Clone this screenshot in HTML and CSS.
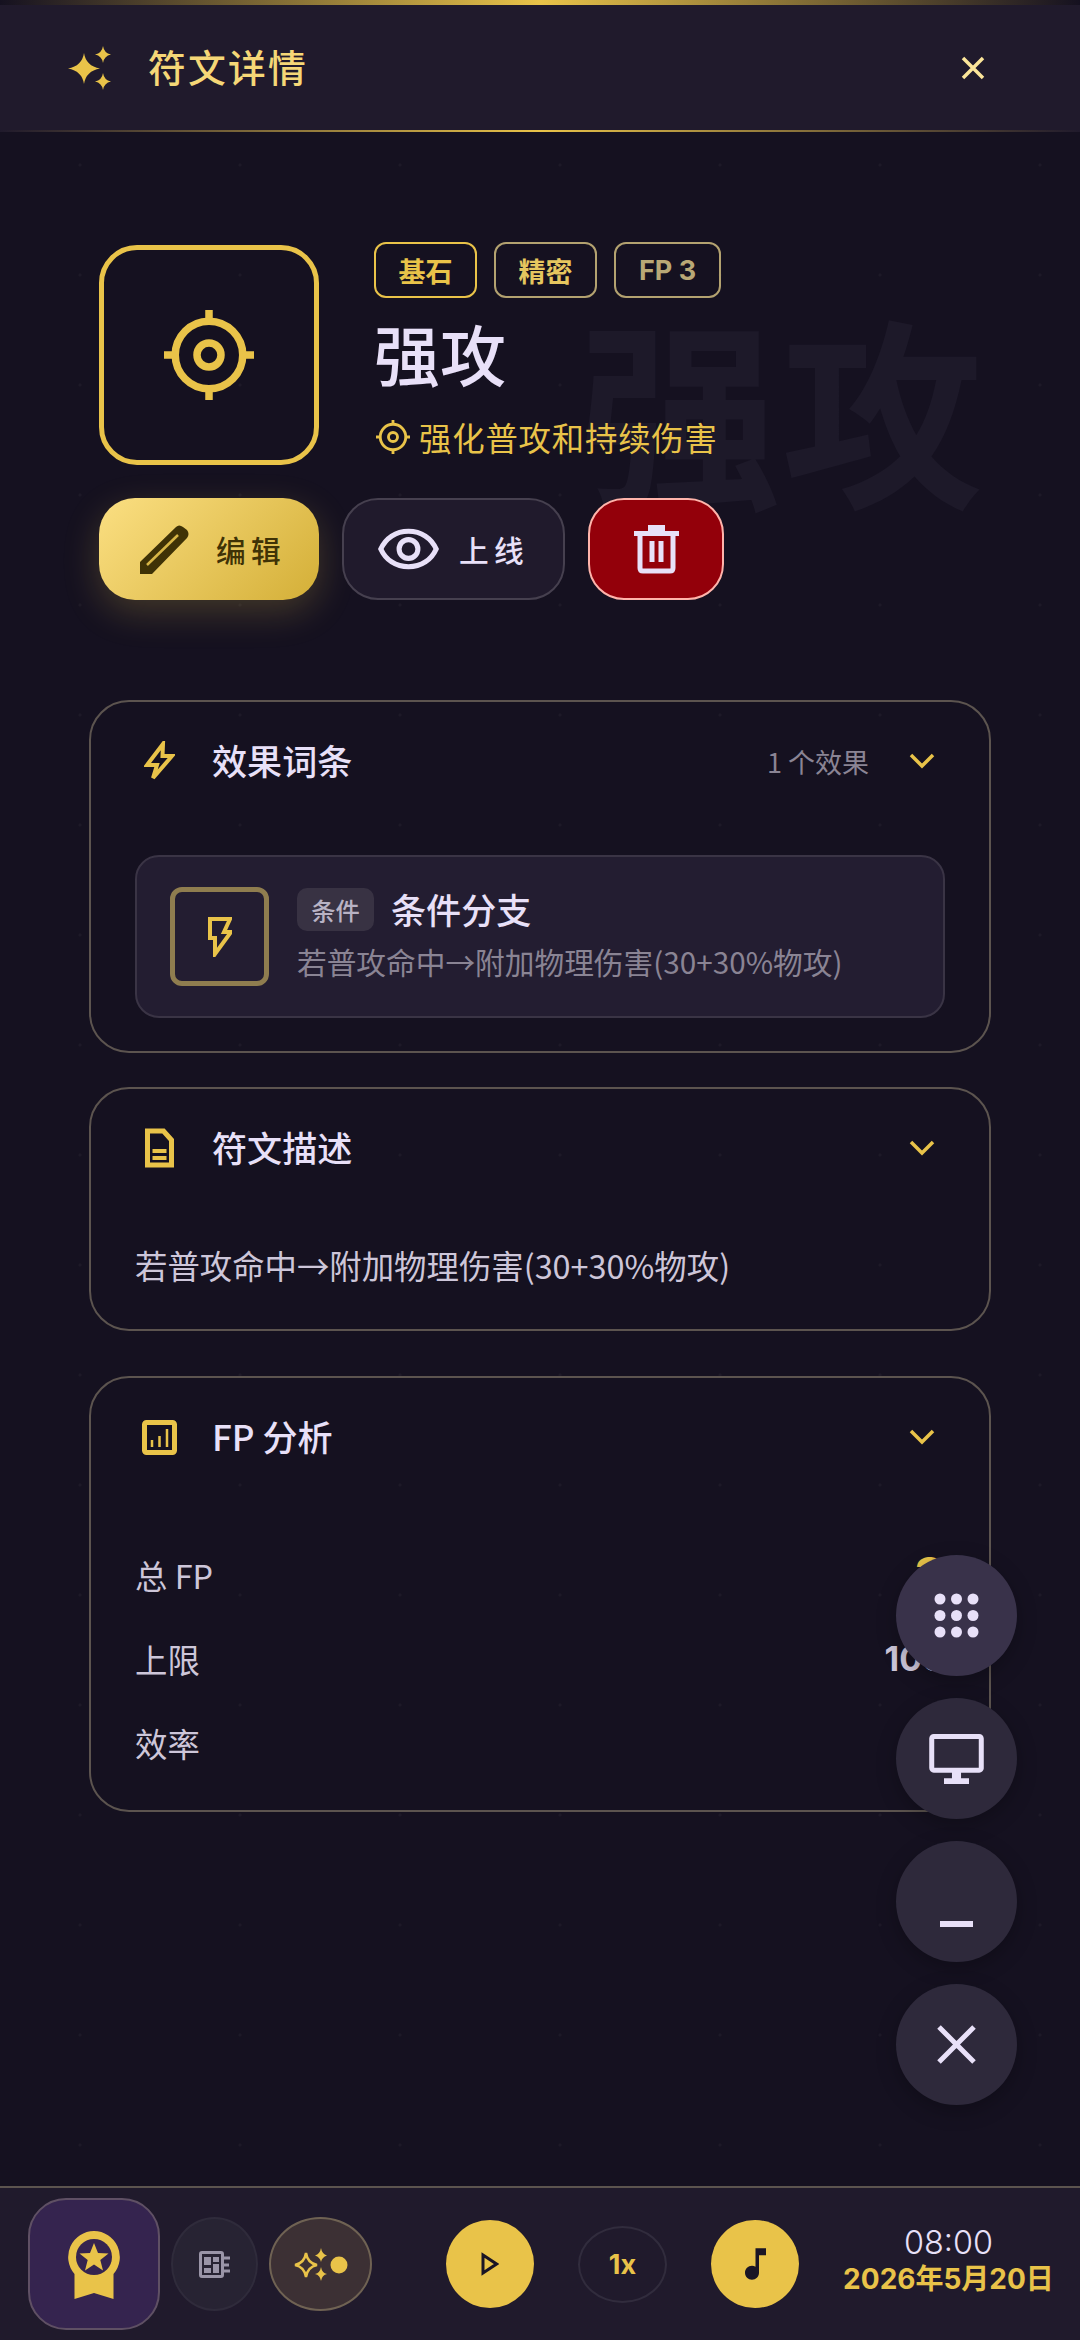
FILE: index.html
```html
<!DOCTYPE html>
<html lang="zh-CN">
<head>
  <meta charset="UTF-8" />
  <meta name="viewport" content="width=device-width, initial-scale=1.0"/>
  <title>符文详情</title>
  <link rel="stylesheet" href="styles.css">
</head>
<body>
  <div class="top-line"></div>

  <header class="header">
    <div class="header-left">
      <svg class="header-spark" viewBox="0 0 44 44"><path d="M16 7Q18 20 32 22.500Q18 25 16 38Q14 25 0 22.500Q14 20 16 7ZM35 0Q36 7 43 8.500Q36 10 35 17Q34 10 27 8.500Q34 7 35 0ZM35 27Q36 34 43 35.500Q36 37 35 44Q34 37 27 35.500Q34 34 35 27Z"/></svg>
      <h1 class="header-title">符文详情</h1>
    </div>
    <svg class="header-close" viewBox="0 0 24 24"><path d="M2 2L22 22M22 2L2 22"/></svg>
  </header>

  <main class="main">
    <section class="hero">
      <div class="watermark">强攻</div>
      <div class="hero-top">
        <div class="rune-icon">
          <svg viewBox="0 0 24 24"><circle cx="12" cy="12" r="9"/><circle cx="12" cy="12" r="3.200"/><path d="M12 0V3.200M12 20.800V24M0 12H3.200M20.800 12H24"/></svg>
        </div>
        <div class="rune-info">
          <div class="tags">
            <span class="tag tag-gold">基石</span>
            <span class="tag">精密</span>
            <span class="tag tag-dim">FP 3</span>
          </div>
          <h2 class="rune-name">强攻</h2>
          <div class="rune-sub">
            <svg viewBox="0 0 24 24"><circle cx="12" cy="12" r="9"/><circle cx="12" cy="12" r="3.200"/><path d="M12 0V3.200M12 20.800V24M0 12H3.200M20.800 12H24"/></svg>
            <span>强化普攻和持续伤害</span>
          </div>
        </div>
      </div>
      <div class="actions">
        <button class="btn btn-edit">
          <svg viewBox="0 0 49 49"><path class="pen" d="M0 49V37L36 2Q39 -1 43 2L47 5Q50 9 47 13L12 49Z"/><path class="pen-line" d="M7 40L38 10"/></svg>
          <span>编辑</span>
        </button>
        <button class="btn btn-online">
          <svg viewBox="0 0 24 16"><path d="M1.100 8C3 3.700 7 1 12 1S21 3.700 22.900 8C21 12.300 17 15 12 15S3 12.300 1.100 8Z"/><circle cx="12" cy="8" r="3.700"/></svg>
          <span>上线</span>
        </button>
        <button class="btn btn-delete">
          <svg viewBox="0 0 45 50"><path d="M0 7H45V12H0ZM14 1H31V7H14Z" class="fill"/><path d="M6 10V44Q6 47 9 47H36Q39 47 39 44V10M18 17V38M27 17V38"/></svg>
        </button>
      </div>
    </section>

    <section class="panel panel-effects">
      <div class="panel-head">
        <svg class="panel-icon" viewBox="0 0 31 40"><path d="M19 3L3 24H13L9 37L28 15H18.500Z"/></svg>
        <h3 class="panel-title">效果词条</h3>
        <span class="panel-count">1 个效果</span>
        <svg class="chevron" viewBox="0 0 26 16"><path d="M2 2L13 13L24 2"/></svg>
      </div>
      <div class="effect">
        <div class="effect-icon">
          <svg viewBox="0 0 24 40"><path d="M2 2H22L16 15H23L7 37V21H2Z"/></svg>
        </div>
        <div class="effect-body">
          <div class="effect-top">
            <span class="effect-tag">条件</span>
            <span class="effect-name">条件分支</span>
          </div>
          <div class="effect-desc">若普攻命中→附加物理伤害(30+30%物攻)</div>
        </div>
      </div>
    </section>

    <section class="panel panel-desc">
      <div class="panel-head">
        <svg class="panel-icon panel-icon-doc" viewBox="0 0 30 40"><path d="M3 3H19L27 12V37H3Z"/><path class="bar" d="M8 23H22M8 30H22"/></svg>
        <h3 class="panel-title">符文描述</h3>
        <svg class="chevron" viewBox="0 0 26 16"><path d="M2 2L13 13L24 2"/></svg>
      </div>
      <p class="desc-text">若普攻命中→附加物理伤害(30+30%物攻)</p>
    </section>

    <section class="panel panel-fp">
      <div class="panel-head">
        <svg class="panel-icon panel-icon-wide" viewBox="0 0 35 35"><rect x="2.500" y="2.500" width="30" height="30" rx="2"/><path class="thin" d="M10 27V20M17.500 27V16M25 27V9"/></svg>
        <h3 class="panel-title">FP 分析</h3>
        <svg class="chevron" viewBox="0 0 26 16"><path d="M2 2L13 13L24 2"/></svg>
      </div>
      <div class="fp-rows">
        <div class="fp-row"><span>总 FP</span><b class="fp-gold">3</b></div>
        <div class="fp-row"><span>上限</span><b>100</b></div>
        <div class="fp-row"><span>效率</span><b class="fp-small">3%</b></div>
      </div>
    </section>
  </main>

  <div class="fabs">
    <button class="fab fab-light">
      <svg class="fab-apps" viewBox="0 0 45 45"><circle cx="6" cy="6" r="5.500"/><circle cx="22.500" cy="6" r="5.500"/><circle cx="39" cy="6" r="5.500"/><circle cx="6" cy="22.500" r="5.500"/><circle cx="22.500" cy="22.500" r="5.500"/><circle cx="39" cy="22.500" r="5.500"/><circle cx="6" cy="39" r="5.500"/><circle cx="22.500" cy="39" r="5.500"/><circle cx="39" cy="39" r="5.500"/></svg>
    </button>
    <button class="fab">
      <svg class="fab-monitor" viewBox="0 0 24 22"><path d="M22 0H2C.9 0 0 .9 0 2V15C0 16.100 .9 17 2 17H10V19.500H6.500V22H17.500V19.500H14V17H22C23.100 17 24 16.100 24 15V2C24 .9 23.100 0 22 0ZM21.800 14.800H2.200V2.200H21.800Z"/></svg>
    </button>
    <button class="fab fab-low">
      <span class="fab-minus"></span>
    </button>
    <button class="fab">
      <svg class="fab-x" viewBox="0 0 39 39"><path d="M2 2L37 37M37 2L2 37"/></svg>
    </button>
  </div>

  <footer class="tabbar">
    <div class="tab-left">
      <button class="tab-badge">
        <svg viewBox="0 0 52 70"><path d="M26 0A26 26 0 0 1 45.500 43V68L26 62L6.500 68V43A26 26 0 0 1 26 0Z" class="gold"/><circle cx="26" cy="26" r="18" class="hole"/><path class="gold" d="M26 12L30 22L40.500 22.500L32.300 29L35 39.500L26 33.500L17 39.500L19.700 29L11.500 22.500L22 22Z"/></svg>
      </button>
      <button class="tab-round tab-news">
        <svg viewBox="0 0 32 27"><rect x="1.500" y="1.500" width="22" height="24" rx="1.500"/><path class="block" d="M5 6H12V14H5ZM14 6H20V11H14ZM5 17H12V22H5ZM14 13H20V22H14Z"/><path d="M24 7H31M24 14H30M24 20H31"/></svg>
      </button>
      <button class="tab-round tab-spark">
        <svg viewBox="0 0 54 33"><path class="open" d="M12 5Q13.500 15 23 17Q13.500 19 12 29Q10.500 19 1 17Q10.500 15 12 5Z"/><path d="M27 0Q28 6 33 7.500Q28 9 27 14Q26 9 21 7.500Q26 6 27 0ZM27 19Q28 25 33 26Q28 27 27 33Q26 27 21 26Q26 25 27 19Z"/><circle cx="45" cy="17" r="8.500"/></svg>
      </button>
    </div>
    <div class="tab-mid">
      <button class="tab-gold">
        <svg class="icon-play" viewBox="0 0 18 24"><path d="M2 3L15.500 12L2 21Z"/></svg>
      </button>
      <button class="tab-speed">1x</button>
      <button class="tab-gold">
        <svg class="icon-music" viewBox="6 3 12 18"><path d="M12 3v10.550c-.59-.34-1.270-.55-2-.55-2.210 0-4 1.790-4 4s1.790 4 4 4 4-1.790 4-4V7h4V3h-6z"/></svg>
      </button>
    </div>
    <div class="clock">
      <div class="clock-time">08:00</div>
      <div class="clock-date">2026年5月20日</div>
    </div>
  </footer>
</body>
</html>
```

FILE: styles.css
```css
:root {
  --gold: #e9c349;
  --lilac: #e8e0f8;
  --bg: #151120;
  --surface: #201a2c;
  --panel-line: #5c544f;
  --font: "Noto Sans CJK SC", "Noto Sans", sans-serif;
  --font-num: Inter, "Noto Sans CJK SC", sans-serif;
}

* {
  box-sizing: border-box;
}

html, body {
  margin: 0;
  padding: 0;
}

body {
  width: 1080px;
  height: 2340px;
  position: relative;
  overflow: hidden;
  display: flex;
  flex-direction: column;
  font-family: var(--font);
  color: var(--lilac);
  background-color: var(--bg);
  background-image: radial-gradient(circle, rgba(255, 255, 255, 0.035) 1px, transparent 2px);
  background-size: 160px 110px;
}

button {
  font-family: inherit;
  padding: 0;
  border: none;
  cursor: pointer;
}

h1, h2, h3, p {
  margin: 0;
}

.top-line {
  height: 5px;
  background: linear-gradient(90deg, transparent, var(--gold) 50%, transparent);
}

.header {
  height: 127px;
  padding: 0 95px 0 68px;
  display: flex;
  align-items: center;
  justify-content: space-between;
  background: var(--surface);
  border-bottom: 2px solid;
  border-image: linear-gradient(90deg, transparent, var(--gold) 50%, transparent) 1;
}

.header-left {
  display: flex;
  align-items: center;
  gap: 36px;
}

.header-spark {
  width: 44px;
  height: 44px;
  fill: var(--gold);
}

.header-title {
  margin-top: -4px;
  font-size: 37.800px;
  line-height: 44px;
  font-weight: 500;
  letter-spacing: 2.200px;
  color: #f5d777;
}

.header-close {
  width: 24px;
  height: 24px;
  fill: none;
  stroke: #fbe59a;
  stroke-width: 3.500;
}

.main {
  flex: 1;
  padding: 110px 89px 0;
}

.hero {
  position: relative;
  padding: 0 10px;
}

.watermark {
  position: absolute;
  left: 490px;
  top: 62px;
  font-size: 202px;
  line-height: 1;
  font-weight: 700;
  color: #1d1929;
  white-space: nowrap;
}

.hero-top {
  position: relative;
  display: flex;
  gap: 55px;
}

.rune-icon {
  width: 220px;
  height: 220px;
  margin-top: 3px;
  flex: none;
  display: flex;
  align-items: center;
  justify-content: center;
  border: 5px solid var(--gold);
  border-radius: 38px;
}

.rune-icon svg {
  width: 90px;
  height: 90px;
  fill: none;
  stroke: var(--gold);
  stroke-width: 2;
}

.tags {
  display: flex;
  gap: 17px;
}

.tag {
  height: 56px;
  padding: 0 22.500px;
  display: flex;
  align-items: center;
  font-family: var(--font-num);
  font-size: 27px;
  font-weight: 700;
  color: #e6c65f;
  border: 2px solid #b3a270;
  border-radius: 12px;
}

.tag-gold {
  border-color: var(--gold);
  color: var(--gold);
}

.tag-dim {
  padding: 0 23px;
  color: #b9a876;
}

.rune-name {
  margin-top: 9px;
  font-size: 66px;
  line-height: 90px;
  font-weight: 500;
}

.rune-sub {
  margin-top: 17px;
  display: flex;
  align-items: center;
  gap: 9px;
  font-size: 32.400px;
  line-height: 46px;
  letter-spacing: 0.800px;
  color: var(--gold);
}

.rune-sub svg {
  width: 34px;
  height: 34px;
  margin-left: 2px;
  fill: none;
  stroke: var(--gold);
  stroke-width: 2;
}

.actions {
  position: relative;
  margin-top: 33px;
  display: flex;
  gap: 23px;
}

.btn {
  height: 102px;
  display: flex;
  align-items: center;
  justify-content: center;
  border-radius: 36px;
  font-size: 29.700px;
  font-weight: 500;
  letter-spacing: 5.400px;
}

.btn-edit {
  width: 220px;
  padding-left: 8px;
  gap: 27px;
  color: #3f3206;
  background: linear-gradient(135deg, #fbdf82, #d4af37);
  box-shadow: 0 12px 36px rgba(233, 195, 73, 0.22);
}

.btn-edit svg {
  width: 49px;
  height: 49px;
}

.pen {
  fill: #3f3206;
}

.pen-line {
  fill: none;
  stroke: #d8b646;
  stroke-width: 2.500;
}

.btn-online {
  width: 223px;
  gap: 20px;
  color: var(--lilac);
  background: var(--surface);
  border: 2px solid #46404f;
}

.btn-online svg {
  width: 61px;
  height: 42px;
  fill: none;
  stroke: var(--lilac);
  stroke-width: 2;
}

.btn-delete {
  width: 136px;
  background: #93000a;
  border: 2px solid #ffb4ab;
}

.btn-delete svg {
  width: 45px;
  height: 50px;
  fill: none;
  stroke: var(--lilac);
  stroke-width: 5;
}

.btn-delete .fill {
  fill: var(--lilac);
  stroke: none;
}

.panel {
  padding: 0 44px;
  border: 2px solid var(--panel-line);
  border-radius: 40px;
}

.panel-effects {
  height: 353px;
  margin-top: 100px;
}

.panel-desc {
  height: 244px;
  margin-top: 34px;
}

.panel-fp {
  height: 436px;
  margin-top: 45px;
}

.panel-head {
  height: 118px;
  display: flex;
  align-items: center;
  gap: 37px;
}

.panel-icon {
  width: 31px;
  height: 40px;
  margin-left: 9px;
  flex: none;
  fill: none;
  stroke: var(--gold);
  stroke-width: 4;
}

.panel-icon-doc {
  stroke-width: 5;
}

.panel-icon .bar {
  stroke-width: 4;
}

.panel-icon .thin {
  stroke-width: 2.500;
}

.panel-icon-wide {
  width: 35px;
  height: 35px;
  margin-left: 7px;
  margin-right: -2px;
  stroke-width: 5;
}

.panel-title {
  margin-top: -3px;
  font-size: 35.100px;
  line-height: 48px;
  font-weight: 500;
  flex: 1;
}

.panel-count {
  font-size: 27px;
  color: #8a8494;
  margin-right: 3px;
}

.chevron {
  width: 26px;
  height: 16px;
  margin-right: 10px;
  fill: none;
  stroke: var(--gold);
  stroke-width: 3.500;
}

.effect {
  height: 163px;
  margin-top: 35px;
  padding: 0 33px;
  display: flex;
  align-items: center;
  gap: 28px;
  background: #231d31;
  border: 2px solid #3a3445;
  border-radius: 24px;
}

.effect-icon {
  width: 99px;
  height: 99px;
  flex: none;
  display: flex;
  align-items: center;
  justify-content: center;
  border: 5px solid #8f7d4f;
  border-radius: 12px;
}

.effect-icon svg {
  width: 24px;
  height: 40px;
  fill: none;
  stroke: var(--gold);
  stroke-width: 4;
}

.effect-body {
  margin-top: -4px;
}

.effect-top {
  display: flex;
  align-items: center;
  gap: 17px;
}

.effect-tag {
  height: 43px;
  width: 77px;
  display: flex;
  align-items: center;
  justify-content: center;
  font-size: 24.300px;
  font-weight: 500;
  color: #b8b2c4;
  background: #383243;
  border-radius: 10px;
}

.effect-name {
  font-size: 35.100px;
  line-height: 48px;
  font-weight: 500;
}

.effect-desc {
  margin-top: 7px;
  font-size: 29.700px;
  line-height: 44px;
  color: #8a8494;
  white-space: nowrap;
}

.desc-text {
  margin-top: 34px;
  font-size: 32.400px;
  line-height: 48px;
  color: #cdc6d9;
  white-space: nowrap;
}

.fp-rows {
  padding-top: 36px;
}

.fp-row {
  height: 84px;
  display: flex;
  align-items: center;
  justify-content: space-between;
  font-size: 32.400px;
  color: #cdc6d9;
}

.fp-row b {
  font-family: var(--font-num);
  font-weight: 700;
  font-size: 34px;
}

.fp-row .fp-gold {
  color: var(--gold);
  font-size: 48px;
}

.fp-row .fp-small {
  font-size: 27px;
}

.fabs {
  position: absolute;
  left: 896px;
  top: 1555px;
  display: flex;
  flex-direction: column;
  gap: 22px;
}

.fab {
  width: 121px;
  height: 121px;
  display: flex;
  align-items: center;
  justify-content: center;
  border-radius: 50%;
  background: #2e293b;
  box-shadow: 0 6px 20px rgba(0, 0, 0, 0.25);
}

.fab-light {
  background: #39324a;
}

.fab-apps {
  width: 45px;
  height: 45px;
  fill: var(--lilac);
}

.fab-monitor {
  width: 55px;
  height: 50px;
  fill: var(--lilac);
}

.fab-minus {
  width: 33px;
  height: 6px;
  margin-top: 44px;
  background: var(--lilac);
}

.fab-x {
  width: 39px;
  height: 39px;
  fill: none;
  stroke: var(--lilac);
  stroke-width: 5;
}

.tabbar {
  height: 154px;
  padding: 0 28px;
  flex: none;
  display: flex;
  align-items: center;
  background: var(--surface);
  border-top: 2px solid var(--panel-line);
}

.tab-left {
  display: flex;
  align-items: center;
  gap: 11px;
}

.tab-badge {
  width: 132px;
  height: 132px;
  display: flex;
  align-items: center;
  justify-content: center;
  border: 2px solid #5f5064;
  border-radius: 38px;
  background: #35244f;
}

.tab-badge svg {
  width: 52px;
  height: 70px;
  margin-top: 3px;
}

.tab-badge .gold {
  fill: var(--gold);
}

.tab-badge .hole {
  fill: #35244f;
}

.tab-round {
  height: 94px;
  display: flex;
  align-items: center;
  justify-content: center;
  border-radius: 50%;
  border: 2px solid #2f2b3b;
}

.tab-news {
  width: 87px;
  background: #272333;
}

.tab-news svg {
  width: 32px;
  height: 27px;
  fill: none;
  stroke: #9a95a8;
  stroke-width: 3;
}

.tab-news .block {
  fill: #9a95a8;
  stroke: none;
}

.tab-spark {
  width: 103px;
  background: #3c3034;
  border-color: #6f6253;
}

.tab-spark svg {
  width: 54px;
  height: 33px;
  fill: var(--gold);
}

.tab-spark .open {
  fill: none;
  stroke: var(--gold);
  stroke-width: 2.500;
}

.tab-mid {
  margin-left: 74px;
  display: flex;
  align-items: center;
  gap: 44px;
}

.tab-gold {
  width: 88px;
  height: 88px;
  display: flex;
  align-items: center;
  justify-content: center;
  border-radius: 50%;
  background: var(--gold);
}

.icon-play {
  width: 18px;
  height: 24px;
  fill: none;
  stroke: #1a1525;
  stroke-width: 3;
}

.icon-music {
  width: 21px;
  height: 32px;
  fill: #1a1525;
}

.tab-speed {
  width: 89px;
  height: 77px;
  border: 2px solid #312c3d;
  border-radius: 50%;
  background: transparent;
  color: var(--gold);
  font-family: var(--font-num);
  font-size: 27px;
  font-weight: 700;
}

.clock {
  flex: 1;
  margin: -6px -18px 0 0;
  padding-left: 28px;
  text-align: center;
  white-space: nowrap;
  font-family: var(--font-num);
}

.clock-time {
  font-size: 32.400px;
  line-height: 36px;
  font-weight: 300;
}

.clock-date {
  font-size: 28px;
  line-height: 36px;
  font-weight: 700;
  color: var(--gold);
}
```
